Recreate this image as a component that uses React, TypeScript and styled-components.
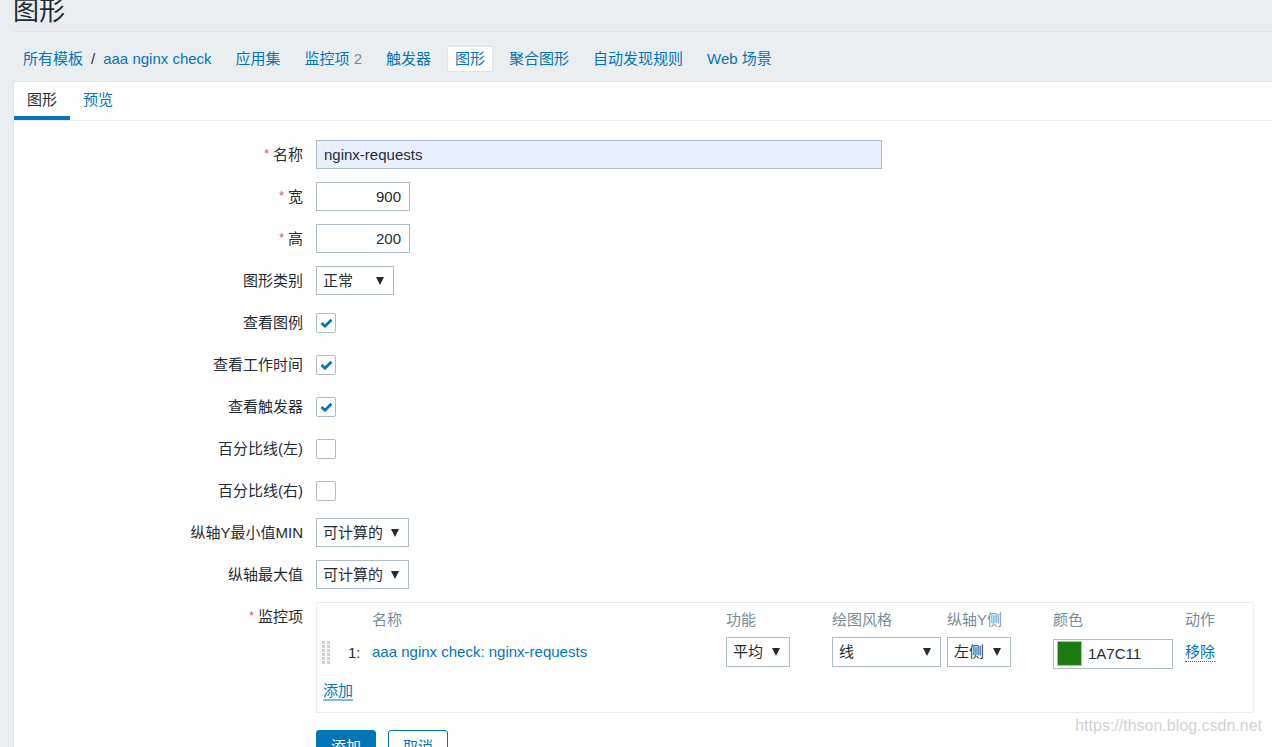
import React from "react";
import styled, { createGlobalStyle } from "styled-components";

const GlobalStyle = createGlobalStyle`
  html, body {
    margin: 0;
    padding: 0;
    background: #ebeef1;
    overflow: hidden;
  }
  body {
    font-family: "Liberation Sans", Arial, "Noto Sans CJK SC", sans-serif;
    font-size: 15px;
    color: #1f2c33;
  }
  * {
    box-sizing: border-box;
  }
`;

const Page = styled.div`
  position: relative;
  height: 747px;
  padding-left: 13px;
  display: flex;
  flex-direction: column;
  overflow: hidden;
`;

const Header = styled.div`
  flex-shrink: 0;
  height: 32px;
  border-bottom: 1px solid #dfe4e7;
  overflow: hidden;

  h1 {
    margin: -3px 0 0;
    font-size: 26px;
    line-height: 28px;
    font-weight: 400;
    color: #1f2c33;
  }
`;

const Nav = styled.nav`
  flex-shrink: 0;
  display: flex;
  align-items: center;
  gap: 8px;
  padding: 14px 0 9px 2px;
`;

const NavItem = styled.a<{ $active?: boolean }>`
  display: flex;
  align-items: center;
  height: 26px;
  padding: 0 7px;
  color: #0275b8;
  text-decoration: none;
  line-height: 18px;
  white-space: nowrap;
  border: 1px solid ${(p) => (p.$active ? "#dfe4e7" : "transparent")};
  border-radius: 2px;
  background: ${(p) => (p.$active ? "#ffffff" : "transparent")};

  .sep {
    color: #1f2c33;
    margin: 0 8px;
  }
  .count {
    color: #768d99;
    margin-left: 4px;
  }
`;

const Panel = styled.div`
  flex: 1;
  flex-shrink: 0;
  background: #ffffff;
  border-top: 1px solid #dfe4e7;
  border-left: 1px solid #dfe4e7;
`;

const TabBar = styled.div`
  display: flex;
  border-bottom: 1px solid #ebeef1;
`;

const Tab = styled.a<{ $active?: boolean }>`
  padding: 9px 13px 7px;
  line-height: 18px;
  color: ${(p) => (p.$active ? "#1f2c33" : "#0275b8")};
  border-bottom: 4px solid ${(p) => (p.$active ? "#0275b8" : "transparent")};
  text-decoration: none;
`;

const Form = styled.div`
  display: grid;
  grid-template-columns: 289px 1fr;
  column-gap: 13px;
  row-gap: 13px;
  padding-top: 19px;
  align-items: start;
`;

const Label = styled.div`
  text-align: right;
  line-height: 29px;
  height: 29px;
  white-space: nowrap;
`;

const Req = styled.span`
  color: #d64e4e;
  font-size: 12px;
  margin-right: 4px;
  vertical-align: 2px;
`;

const Field = styled.div`
  display: flex;
  align-items: center;
  height: 29px;
`;

const TextInput = styled.div<{ $w: number; $right?: boolean; $filled?: boolean }>`
  width: ${(p) => p.$w}px;
  height: 29px;
  border: 1px solid #acbbc4;
  background: ${(p) => (p.$filled ? "#e8f0fe" : "#ffffff")};
  padding: 0 ${(p) => (p.$right ? 8 : 7)}px;
  line-height: 27px;
  text-align: ${(p) => (p.$right ? "right" : "left")};
`;

const Select = styled.div<{ $w: number; $h?: number }>`
  width: ${(p) => p.$w}px;
  height: ${(p) => p.$h ?? 29}px;
  border: 1px solid #acbbc4;
  background: #ffffff;
  display: flex;
  align-items: center;
  justify-content: space-between;
  padding: 0 9px 0 6px;
  line-height: 18px;
  white-space: nowrap;

  &::after {
    content: "";
    border-left: 4px solid transparent;
    border-right: 4px solid transparent;
    border-top: 8px solid #1f2c33;
  }
`;

const Check = styled.div`
  width: 20px;
  height: 20px;
  border: 1px solid #acbbc4;
  border-radius: 2px;
  background: #ffffff;
  display: flex;
  align-items: center;
  justify-content: center;
`;

const ItemsBox = styled.div`
  width: 938px;
  border: 1px solid #ebeef1;
  padding: 8px 0 12px 5px;
`;

const ItemsGrid = styled.div`
  display: grid;
  grid-template-columns: 26px 24px 354px 106px 115px 106px 132px auto;
  row-gap: 8px;
  align-items: center;
`;

const Th = styled.div`
  color: #768d99;
  line-height: 18px;
  white-space: nowrap;
`;

const Cell = styled.div`
  display: flex;
  align-items: center;
  height: 30px;
  white-space: nowrap;
`;

const Link = styled.a<{ $under?: "dotted" | "solid" }>`
  color: #0275b8;
  text-decoration: none;
  line-height: 18px;
  border-bottom: ${(p) =>
    p.$under === "dotted"
      ? "1px dotted #0275b8"
      : p.$under === "solid"
      ? "2px solid #7fbadc"
      : "none"};
`;

const ColorInput = styled.div`
  width: 120px;
  height: 30px;
  margin-top: 3px;
  border: 1px solid #acbbc4;
  display: flex;
  align-items: center;
  gap: 6px;
  padding-left: 3px;
`;

const Swatch = styled.div<{ $color: string }>`
  width: 25px;
  height: 25px;
  background: ${(p) => p.$color};
  border: 1px solid #acbbc4;
`;

const AddRow = styled.div`
  margin-top: 15px;
  padding-left: 1px;
`;

const Buttons = styled.div`
  grid-column: 2;
  display: flex;
  gap: 12px;
  margin-top: 4px;
`;

const Button = styled.button<{ $primary?: boolean }>`
  width: 60px;
  height: 30px;
  border-radius: 3px;
  font: inherit;
  border: 1px solid #0275b8;
  background: ${(p) => (p.$primary ? "#0275b8" : "#ffffff")};
  color: ${(p) => (p.$primary ? "#ffffff" : "#0275b8")};
  padding: 0;
`;

const Watermark = styled.div`
  position: absolute;
  right: 10px;
  top: 716px;
  font-size: 16px;
  color: #d2d2d2;
  line-height: 20px;
`;

const CheckMark = () => (
  <svg width="13" height="10" viewBox="0 0 13 10">
    <path d="M1.5 5 L5 8.2 L11.5 1.8" fill="none" stroke="#0275b8" strokeWidth="2.8" />
  </svg>
);

const DragHandle = () => (
  <svg width="8" height="23" viewBox="0 0 8 23">
    {[0, 1, 2, 3, 4, 5].map((r) =>
      [0, 5].map((c) => (
        <rect key={`${r}-${c}`} x={c} y={r * 4} width="3" height="3" fill="#c9d1d6" />
      ))
    )}
  </svg>
);

const checkRows: { label: string; checked: boolean }[] = [
  { label: "查看图例", checked: true },
  { label: "查看工作时间", checked: true },
  { label: "查看触发器", checked: true },
  { label: "百分比线(左)", checked: false },
  { label: "百分比线(右)", checked: false },
];

export default function App() {
  return (
    <Page>
      <GlobalStyle />
      <Header>
        <h1>图形</h1>
      </Header>
      <Nav>
        <NavItem>
          所有模板<span className="sep">/</span>aaa nginx check
        </NavItem>
        <NavItem>应用集</NavItem>
        <NavItem>
          监控项<span className="count">2</span>
        </NavItem>
        <NavItem>触发器</NavItem>
        <NavItem $active>图形</NavItem>
        <NavItem>聚合图形</NavItem>
        <NavItem>自动发现规则</NavItem>
        <NavItem>Web 场景</NavItem>
      </Nav>
      <Panel>
        <TabBar>
          <Tab $active>图形</Tab>
          <Tab>预览</Tab>
        </TabBar>
        <Form>
          <Label>
            <Req>*</Req>名称
          </Label>
          <Field>
            <TextInput $w={566} $filled>
              nginx-requests
            </TextInput>
          </Field>

          <Label>
            <Req>*</Req>宽
          </Label>
          <Field>
            <TextInput $w={94} $right>
              900
            </TextInput>
          </Field>

          <Label>
            <Req>*</Req>高
          </Label>
          <Field>
            <TextInput $w={94} $right>
              200
            </TextInput>
          </Field>

          <Label>图形类别</Label>
          <Field>
            <Select $w={78}>正常</Select>
          </Field>

          {checkRows.map((r) => (
            <React.Fragment key={r.label}>
              <Label>{r.label}</Label>
              <Field>
                <Check>{r.checked && <CheckMark />}</Check>
              </Field>
            </React.Fragment>
          ))}

          <Label>纵轴Y最小值MIN</Label>
          <Field>
            <Select $w={93}>可计算的</Select>
          </Field>

          <Label>纵轴最大值</Label>
          <Field>
            <Select $w={93}>可计算的</Select>
          </Field>

          <Label>
            <Req>*</Req>监控项
          </Label>
          <ItemsBox>
            <ItemsGrid>
              <Th />
              <Th />
              <Th>名称</Th>
              <Th>功能</Th>
              <Th>绘图风格</Th>
              <Th>纵轴Y侧</Th>
              <Th>颜色</Th>
              <Th>动作</Th>

              <Cell>
                <DragHandle />
              </Cell>
              <Cell>1:</Cell>
              <Cell>
                <Link>aaa nginx check: nginx-requests</Link>
              </Cell>
              <Cell>
                <Select $w={64} $h={30}>平均</Select>
              </Cell>
              <Cell>
                <Select $w={109} $h={30}>线</Select>
              </Cell>
              <Cell>
                <Select $w={64} $h={30}>左侧</Select>
              </Cell>
              <Cell>
                <ColorInput>
                  <Swatch $color="#1A7C11" />
                  1A7C11
                </ColorInput>
              </Cell>
              <Cell>
                <Link $under="dotted">移除</Link>
              </Cell>
            </ItemsGrid>
            <AddRow>
              <Link $under="solid">添加</Link>
            </AddRow>
          </ItemsBox>

          <Buttons>
            <Button $primary>添加</Button>
            <Button>取消</Button>
          </Buttons>
        </Form>
      </Panel>
      <Watermark>https://thson.blog.csdn.net</Watermark>
    </Page>
  );
}
